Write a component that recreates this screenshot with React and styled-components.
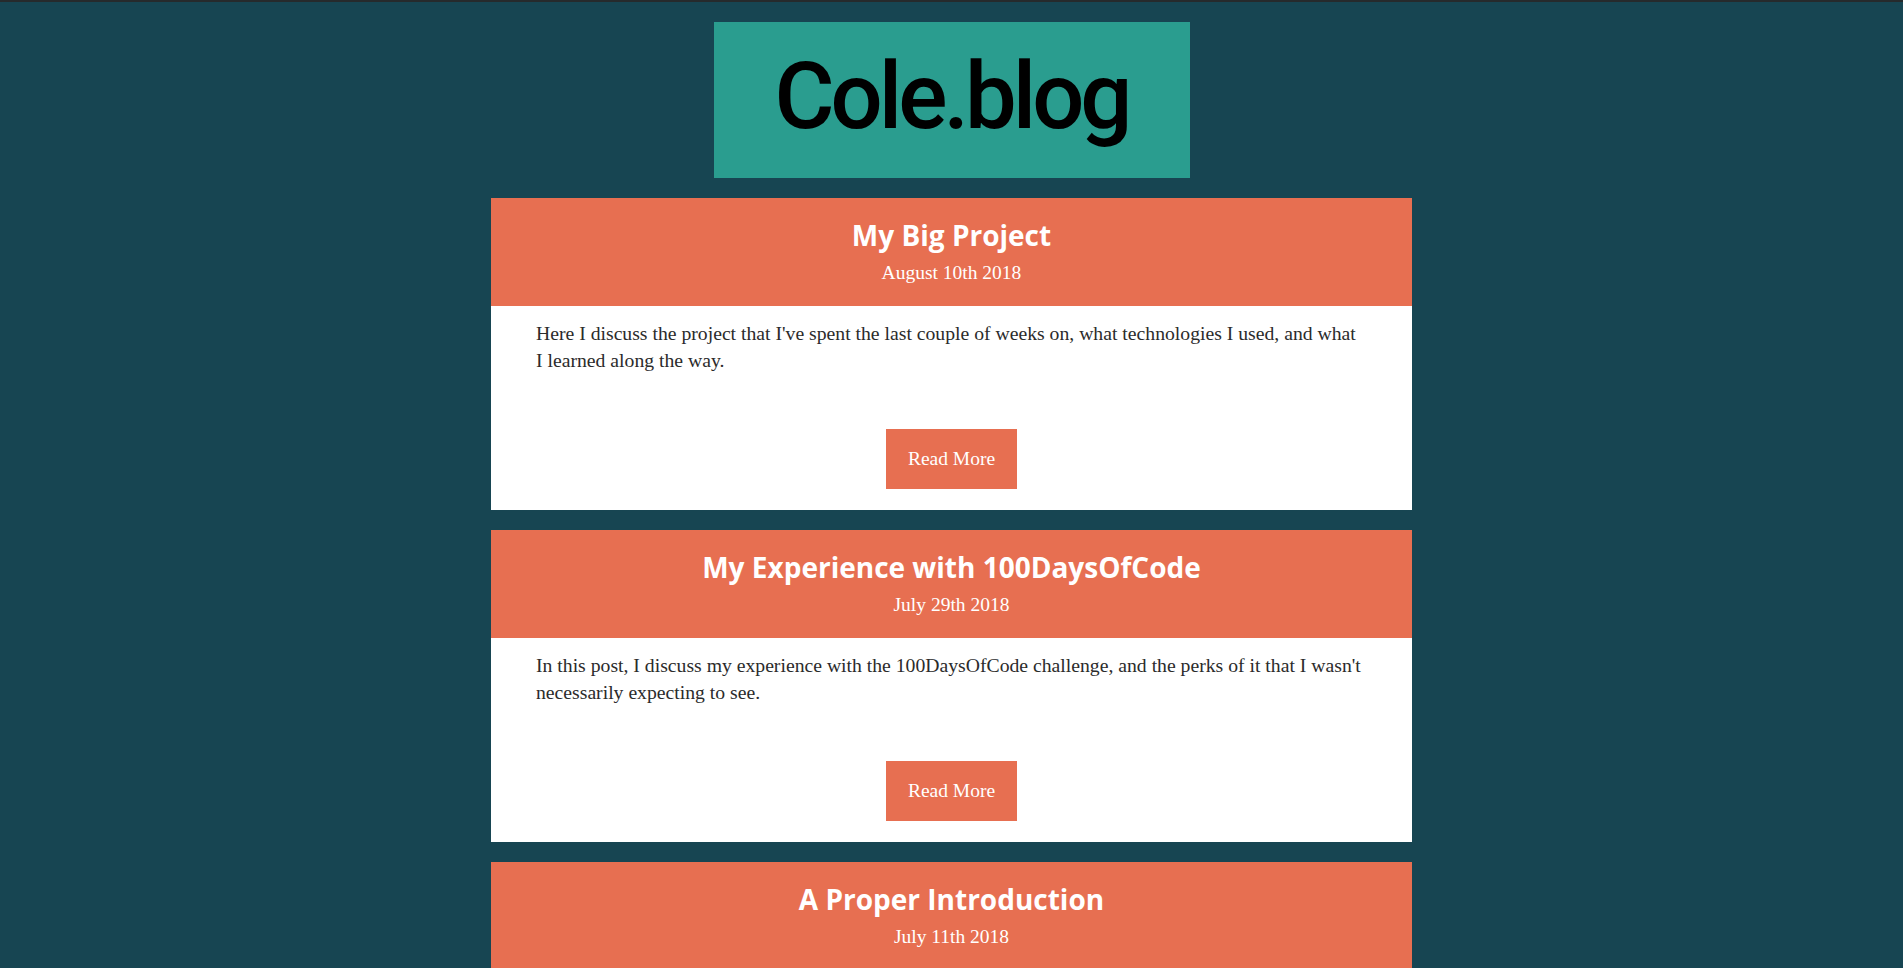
import React from "react";
import styled, { createGlobalStyle } from "styled-components";

const GlobalStyle = createGlobalStyle`
  html, body {
    margin: 0;
    padding: 0;
    background: #174552;
  }
  body {
    border-top: 2px solid #262a2c;
    font-family: "Liberation Serif", "DejaVu Serif", serif;
  }
`;

const StyledPage = styled.div`
  display: flex;
  flex-direction: column;
  align-items: center;
  padding-top: 20px;
`;

const StyledLogo = styled.div`
  width: 476px;
  height: 156px;
  background: #2a9d8f;
  display: flex;
  align-items: center;
  justify-content: center;
  margin-bottom: 20px;

  h1 {
    margin: 0;
    font-family: Roboto, "DejaVu Sans", sans-serif;
    font-weight: 500;
    font-size: 92px;
    letter-spacing: -4px;
    color: #000;
    line-height: 1;
    padding-bottom: 6px;
  }
`;

const StyledPostList = styled.div`
  display: flex;
  flex-direction: column;
  gap: 20px;
  width: 921px;
`;

const StyledPost = styled.article`
  background: #fff;
`;

const StyledPostHeader = styled.header`
  background: #e76f51;
  color: #fff;
  text-align: center;
  height: 108px;
  box-sizing: border-box;
  padding-top: 18px;

  h2 {
    margin: 0;
    font-family: "Open Sans", Lato, sans-serif;
    font-weight: 700;
    font-size: 28px;
    line-height: 38px;
  }

  p {
    margin: 7px 0 0;
    font-size: 19.5px;
    line-height: 24px;
  }
`;

const StyledPostBody = styled.div`
  display: flex;
  flex-direction: column;
  align-items: center;
  padding: 14px 45px 21px;

  p {
    align-self: stretch;
    margin: 0;
    font-size: 19.7px;
    line-height: 27px;
    color: #2b2b2b;
  }
`;

const StyledReadMore = styled.button`
  margin-top: 55px;
  width: 131px;
  height: 60px;
  border: none;
  background: #e76f51;
  color: #fff;
  font-family: "Liberation Serif", "DejaVu Serif", serif;
  font-size: 19.5px;
  cursor: pointer;
`;

const posts = [
  {
    title: "My Big Project",
    date: "August 10th 2018",
    summary:
      "Here I discuss the project that I've spent the last couple of weeks on, what technologies I used, and what I learned along the way.",
  },
  {
    title: "My Experience with 100DaysOfCode",
    date: "July 29th 2018",
    summary:
      "In this post, I discuss my experience with the 100DaysOfCode challenge, and the perks of it that I wasn't necessarily expecting to see.",
  },
  {
    title: "A Proper Introduction",
    date: "July 11th 2018",
    summary:
      "A bit about who I am, where I come from, and what I hope to write about on this blog going forward.",
  },
];

function App() {
  return (
    <>
      <GlobalStyle />
      <StyledPage>
        <StyledLogo>
          <h1>Cole.blog</h1>
        </StyledLogo>
        <StyledPostList>
          {posts.map((post) => (
            <StyledPost key={post.title}>
              <StyledPostHeader>
                <h2>{post.title}</h2>
                <p>{post.date}</p>
              </StyledPostHeader>
              <StyledPostBody>
                <p>{post.summary}</p>
                <StyledReadMore>Read More</StyledReadMore>
              </StyledPostBody>
            </StyledPost>
          ))}
        </StyledPostList>
      </StyledPage>
    </>
  );
}

export default App;
